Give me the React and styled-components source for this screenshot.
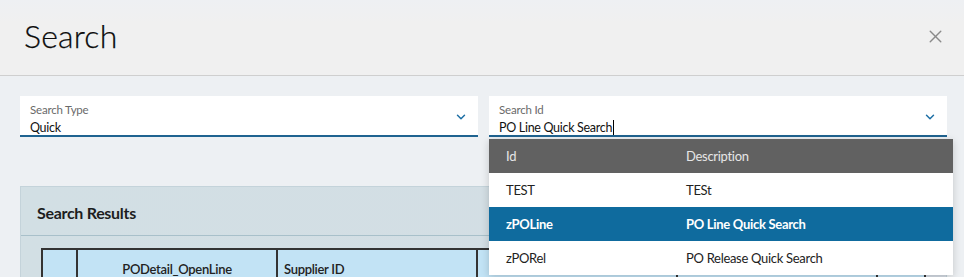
import React from "react";
import styled, { createGlobalStyle } from "styled-components";
import { ChevronDown, X } from "lucide-react";

const GlobalStl = createGlobalStyle`
    html, body {
        margin: 0;
        padding: 0;
        background: #edf0f3;
        font-family: Lato, "Liberation Sans", sans-serif;
        color: #222;
    }
`;

const options = [
    { id: "TEST", desc: "TESt" },
    { id: "zPOLine", desc: "PO Line Quick Search", selected: true },
    { id: "zPORel", desc: "PO Release Quick Search" },
];

export default function App() {
    return (
        <>
            <GlobalStl />
            <ModalStl>
                <HeaderStl>
                    <TitleStl>Search</TitleStl>
                    <CloseStl>
                        <X size={21} strokeWidth={1.6} />
                    </CloseStl>
                </HeaderStl>
                <BodyStl>
                    <FieldsRowStl>
                        <FieldStl>
                            <FieldTextStl>
                                <LabelStl>Search Type</LabelStl>
                                <ValueStl>Quick</ValueStl>
                            </FieldTextStl>
                            <ChevronDown size={14} strokeWidth={2.5} color="#1d6fa5" />
                        </FieldStl>
                        <FieldWrapStl>
                            <FieldStl>
                                <FieldTextStl>
                                    <LabelStl>Search Id</LabelStl>
                                    <ValueStl>
                                        PO Line Quick Search
                                        <CaretStl />
                                    </ValueStl>
                                </FieldTextStl>
                                <ChevronDown size={14} strokeWidth={2.5} color="#1d6fa5" />
                            </FieldStl>
                            <DropdownStl>
                                <OptionRowStl $head>
                                    <span>Id</span>
                                    <span>Description</span>
                                </OptionRowStl>
                                {options.map((o) => (
                                    <OptionRowStl key={o.id} $selected={o.selected}>
                                        <span>{o.id}</span>
                                        <span>{o.desc}</span>
                                    </OptionRowStl>
                                ))}
                            </DropdownStl>
                        </FieldWrapStl>
                    </FieldsRowStl>
                    <ResultsStl>
                        <ResultsTitleStl>Search Results</ResultsTitleStl>
                        <TableWrapStl>
                            <TableStl>
                                <thead>
                                    <tr>
                                        <ThStl $w={35} />
                                        <ThStl $w={200} $center>
                                            PODetail_OpenLine
                                        </ThStl>
                                        <ThStl $w={200}>Supplier ID</ThStl>
                                        <ThStl $w={200} />
                                        <ThStl $w={200} />
                                        <ThStl />
                                    </tr>
                                </thead>
                            </TableStl>
                        </TableWrapStl>
                    </ResultsStl>
                </BodyStl>
            </ModalStl>
        </>
    );
}

const ModalStl = styled.div`
    width: 964px;
    height: 277px;
    overflow: hidden;
    background: #edf0f3;
`;

const HeaderStl = styled.div`
    height: 76px;
    display: flex;
    align-items: center;
    justify-content: space-between;
    padding: 0 18px 0 24px;
    box-sizing: border-box;
    background: linear-gradient(#eef0f3, #f0f0f0 30%);
    border-bottom: 1px solid #cfcfcf;
`;

const TitleStl = styled.h1`
    margin: 0;
    font-size: 32px;
    font-weight: 300;
    color: #0c0c0c;
    letter-spacing: 0.2px;
    margin-top: -4px;
    -webkit-text-stroke: 0.25px #0c0c0c;
`;

const CloseStl = styled.span`
    display: flex;
    color: #8a8a8a;
    margin-top: -2px;
`;

const BodyStl = styled.div`
    padding: 20px 17px 0 20px;
`;

const FieldsRowStl = styled.div`
    display: grid;
    grid-template-columns: 458px 458px;
    gap: 11px;
`;

const FieldWrapStl = styled.div`
    position: relative;
`;

const FieldStl = styled.div`
    height: 41px;
    box-sizing: border-box;
    background: #fff;
    border-bottom: 2px solid #1f6390;
    display: flex;
    align-items: center;
    justify-content: space-between;
    padding: 0 10px 0 10px;
    svg {
        margin-top: 3px;
    }
`;

const FieldTextStl = styled.div`
    display: flex;
    flex-direction: column;
    gap: 4px;
    padding-top: 7px;
`;

const LabelStl = styled.span`
    font-size: 11.5px;
    color: #6a6a6a;
    letter-spacing: -0.2px;
`;

const ValueStl = styled.span`
    font-size: 12.5px;
    color: #111;
    letter-spacing: -0.3px;
    display: flex;
    align-items: center;
`;

const CaretStl = styled.i`
    display: inline-block;
    width: 1px;
    height: 15px;
    background: #000;
    margin-left: 1px;
`;

const DropdownStl = styled.div`
    position: absolute;
    top: 43px;
    left: 0;
    width: 464px;
    background: #fff;
    box-shadow: 0 2px 8px rgba(0, 0, 0, 0.18);
    z-index: 5;
`;

const OptionRowStl = styled.div`
    height: 34px;
    display: grid;
    grid-template-columns: 180px 1fr;
    align-items: center;
    padding-left: 17px;
    font-size: 13px;
    letter-spacing: -0.3px;
    font-weight: ${(p) => (p.$selected ? 700 : 400)};
    background: ${(p) =>
        p.$head ? "#616161" : p.$selected ? "#0f6b9e" : "#fff"};
    color: ${(p) => (p.$head ? "#e6e6e6" : p.$selected ? "#fff" : "#222")};
`;

const ResultsStl = styled.div`
    margin-top: 49px;
    width: 927px;
    background: linear-gradient(90deg, #d2dfe4, #d3dee4 60%, #d6dde6);
    border: 1px solid #c4d3da;
    box-sizing: border-box;
    height: 200px;
`;

const ResultsTitleStl = styled.div`
    height: 49px;
    box-sizing: border-box;
    padding: 2px 16px 0;
    display: flex;
    align-items: center;
    font-size: 16px;
    font-weight: 700;
    color: #1d1d1d;
    letter-spacing: -0.3px;
    border-bottom: 1px solid #a8c0ca;
`;

const TableWrapStl = styled.div`
    padding: 12px 20px 0 20px;
`;

const TableStl = styled.table`
    border-collapse: collapse;
    table-layout: fixed;
    width: 100%;
`;

const ThStl = styled.th`
    width: ${(p) => (p.$w ? `${p.$w}px` : "auto")};
    height: 40px;
    box-sizing: border-box;
    background: #c2e3f5;
    border: 2px solid #333;
    font-size: 13px;
    font-weight: 600;
    letter-spacing: -0.3px;
    color: #222;
    padding: 0 6px;
    text-align: ${(p) => (p.$center ? "center" : "left")};
    vertical-align: middle;
`;
